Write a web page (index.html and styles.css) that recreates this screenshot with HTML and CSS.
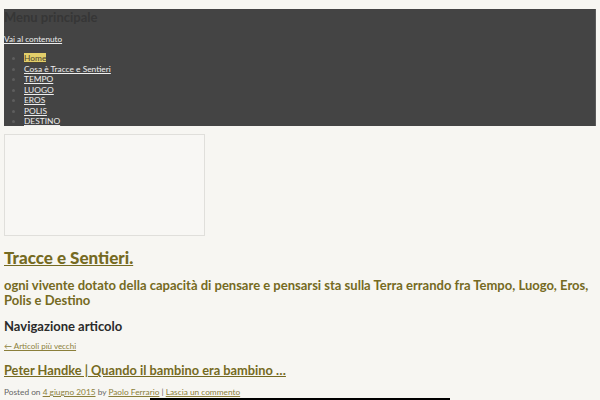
FILE: index.html
```html
<!DOCTYPE html>
<html lang="it">
<head>
<meta charset="utf-8">
<title>Tracce e Sentieri.</title>
<link rel="stylesheet" href="styles.css">
</head>
<body>
<div class="page">
  <nav class="nav">
    <h3 class="nav-title">Menu principale</h3>
    <a class="skip" href="#content">Vai al contenuto</a>
    <ul class="menu">
      <li><a class="current" href="#">Home</a></li>
      <li><a href="#">Cosa è Tracce e Sentieri</a></li>
      <li><a href="#">TEMPO</a></li>
      <li><a href="#">LUOGO</a></li>
      <li><a href="#">EROS</a></li>
      <li><a href="#">POLIS</a></li>
      <li><a href="#">DESTINO</a></li>
    </ul>
  </nav>
  <div class="header-img"></div>
  <h1 class="site-title"><a href="#">Tracce e Sentieri.</a></h1>
  <h2 class="tagline">ogni vivente dotato della capacità di pensare e pensarsi sta sulla Terra errando fra Tempo, Luogo, Eros, Polis e Destino</h2>
  <h3 class="nav-heading">Navigazione articolo</h3>
  <a class="older" href="#">← Articoli più vecchi</a>
  <h2 class="entry-title"><a href="#">Peter Handke | Quando il bambino era bambino …</a></h2>
  <div class="meta">Posted on <a href="#">4 giugno 2015</a> by <a href="#">Paolo Ferrario</a> | <a href="#">Lascia un commento</a></div>
  <div class="media"></div>
</div>
</body>
</html>
```
FILE: styles.css
```css
html, body {
  margin: 0;
  padding: 0;
  background: #f7f6f2;
}
body {
  font-family: Lato, "Open Sans", sans-serif;
  color: #333;
}
.page {
  padding: 9px 4px 0;
}
.nav {
  background: #444;
  height: 117px;
  border-right: 1px solid #5a5a5a;
  overflow: hidden;
}
.nav-title {
  margin: 0;
  font-size: 13px;
  font-weight: 700;
  line-height: 17px;
  color: #363636;
}
.skip {
  display: block;
  margin-top: 8px;
  font-size: 8.2px;
  line-height: 11px;
  color: #eee;
}
.menu {
  margin: 8px 0 0;
  padding: 0 0 0 20px;
  list-style: disc;
  color: #5e5e5e;
  font-size: 8.4px;
  line-height: 10.5px;
}
.menu a {
  color: #eee;
}
.menu a.current {
  background: #e3cf6a;
  color: #4b4530;
}
.header-img {
  width: 199px;
  height: 100px;
  margin-top: 8px;
  border: 1px solid #e0dfdb;
  background: #f8f7f4;
}
.site-title {
  margin: 12px 0 0;
  font-size: 17px;
  line-height: 20px;
  font-weight: 900;
}
.site-title a, .entry-title a {
  color: #756a22;
}
.tagline {
  margin: 10px 0 0;
  font-size: 13px;
  line-height: 15px;
  font-weight: 700;
  color: #756a22;
}
.nav-heading {
  margin: 9px 0 0;
  font-size: 13px;
  line-height: 18px;
  font-weight: 700;
  color: #2a2a2a;
}
.older {
  display: block;
  margin-top: 6px;
  font-size: 8px;
  line-height: 11px;
  color: #8b7f3a;
}
.entry-title {
  margin: 9px 0 0;
  font-size: 12.8px;
  line-height: 18px;
  font-weight: 700;
}
.meta {
  margin-top: 8px;
  font-size: 8.3px;
  line-height: 11px;
  color: #666;
}
.meta a {
  color: #8b7f3a;
}
.media {
  width: 300px;
  height: 3px;
  margin: 0 0 0 146px;
  background: #000;
}
```
